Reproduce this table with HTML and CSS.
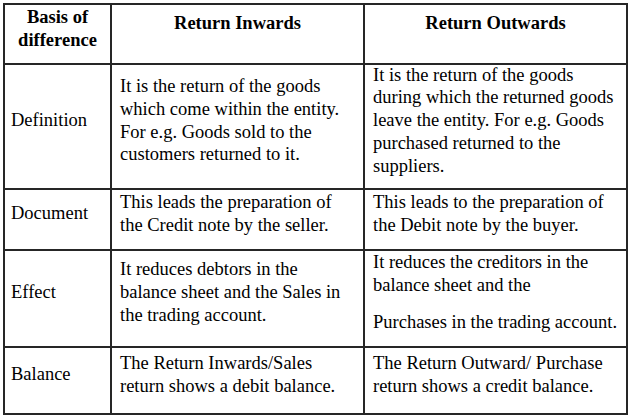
FILE: index.html
```html
<!DOCTYPE html>
<html>
<head>
<meta charset="utf-8">
<link rel="stylesheet" href="styles.css">
</head>
<body>
<div class="table">
  <div class="cell head first"><p>Basis of<br>difference</p></div>
  <div class="cell head"><p>Return Inwards</p></div>
  <div class="cell head"><p>Return Outwards</p></div>

  <div class="cell label"><p>Definition</p></div>
  <div class="cell"><p>It is the return of the goods<br>which come within the entity.<br>For e.g. Goods sold to the<br>customers returned to it.</p></div>
  <div class="cell"><p>It is the return of the goods<br>during which the returned goods<br>leave the entity. For e.g. Goods<br>purchased returned to the<br>suppliers.</p></div>

  <div class="cell label"><p>Document</p></div>
  <div class="cell"><p>This leads the preparation of<br>the Credit note by the seller.</p></div>
  <div class="cell"><p>This leads to the preparation of<br>the Debit note by the buyer.</p></div>

  <div class="cell label"><p>Effect</p></div>
  <div class="cell"><p>It reduces debtors in the<br>balance sheet and the Sales in<br>the trading account.</p></div>
  <div class="cell"><p>It reduces the creditors in the<br>balance sheet and the</p><p>Purchases in the trading account.</p></div>

  <div class="cell label"><p>Balance</p></div>
  <div class="cell"><p>The Return Inwards/Sales<br>return shows a debit balance.</p></div>
  <div class="cell"><p>The Return Outward/ Purchase<br>return shows a credit balance.</p></div>
</div>
</body>
</html>
```
FILE: styles.css
```css
html, body {
  margin: 0;
  padding: 0;
  background: #ffffff;
}
body {
  padding: 3px 0 0 3px;
  font-family: "Liberation Serif", "Times New Roman", serif;
  font-size: 18.5px;
  line-height: 22.7px;
  color: #000;
}
.table {
  display: grid;
  width: 625px;
  box-sizing: border-box;
  grid-template-columns: 107px 253px 263px;
  grid-template-rows: 60px 125px 61px 97px 67px;
  border-top: 2px solid #262626;
  border-left: 2px solid #262626;
}
.cell {
  border-right: 2px solid #262626;
  border-bottom: 2px solid #262626;
  padding: 0 6px 0 8px;
  display: flex;
  flex-direction: column;
  justify-content: center;
  white-space: nowrap;
  overflow: hidden;
}
.cell p {
  margin: 0 0 14px 0;
}
.cell p:last-child {
  margin-bottom: 12px;
}
.label {
  padding-left: 6px;
}
.head {
  font-weight: bold;
  text-align: center;
  justify-content: flex-start;
  padding: 7px 4px 0 4px;
}
.head.first {
  padding-top: 1px;
}
.head p,
.head p:last-child {
  margin: 0;
}
```
